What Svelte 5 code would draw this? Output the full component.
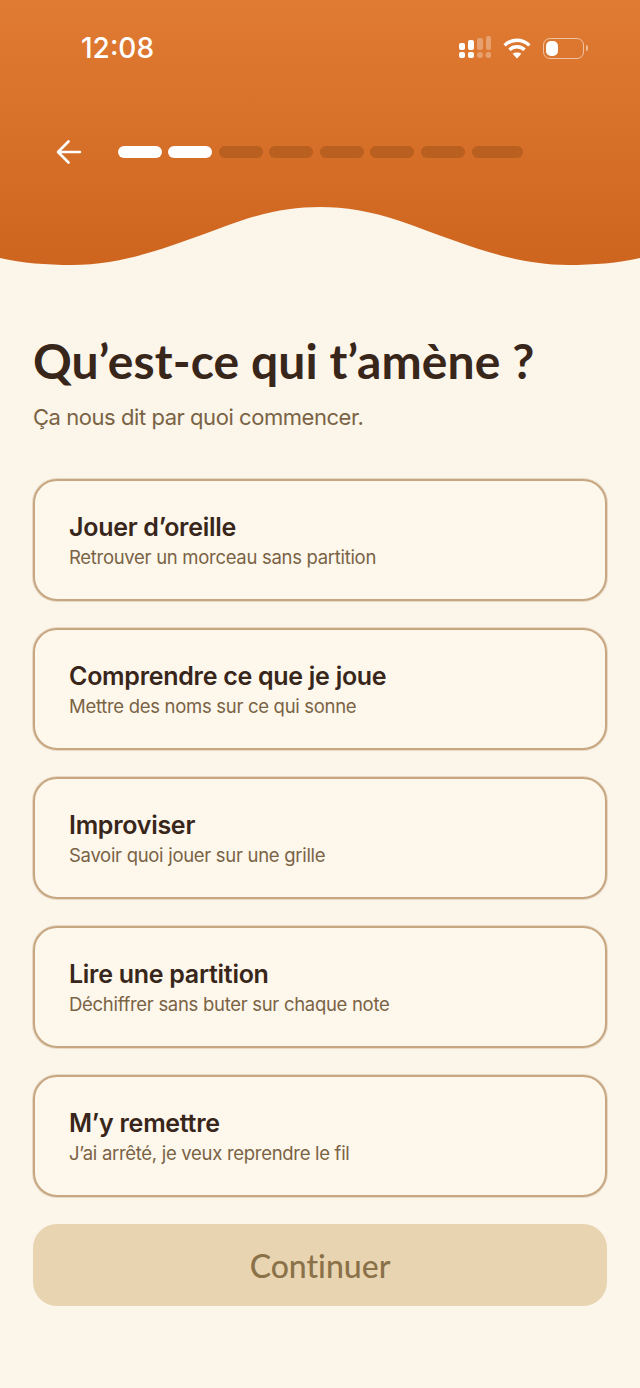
<script>
  const steps = [true, true, false, false, false, false, false, false];

  const options = [
    { title: "Jouer d’oreille", sub: "Retrouver un morceau sans partition" },
    { title: "Comprendre ce que je joue", sub: "Mettre des noms sur ce qui sonne" },
    { title: "Improviser", sub: "Savoir quoi jouer sur une grille" },
    { title: "Lire une partition", sub: "Déchiffrer sans buter sur chaque note" },
    { title: "M’y remettre", sub: "J’ai arrêté, je veux reprendre le fil" },
  ];
</script>

<div class="screen">
  <header class="hero">
    <div class="status">
      <span class="time">12:08</span>
      <div class="status-icons">
        <svg width="32" height="24" viewBox="0 0 32 24" fill="#fff">
          <rect x="0" y="7" width="6" height="7" rx="2" />
          <rect x="0" y="16" width="6" height="6" rx="2" />
          <rect x="9" y="4" width="6" height="10" rx="2" />
          <rect x="9" y="16" width="6" height="6" rx="2" />
          <g opacity="0.3">
            <rect x="18" y="2" width="6" height="12" rx="2" />
            <circle cx="21" cy="19" r="3" />
            <rect x="27" y="0" width="5" height="14" rx="2" />
            <circle cx="29.5" cy="19" r="3" />
          </g>
        </svg>
        <svg class="wifi" width="28" height="22" viewBox="0 0 28 22" fill="none" stroke="#fff" stroke-width="3.4">
          <path d="M1.6 8.4C8.6 1.6 19.4 1.6 26.4 8.4" />
          <path d="M6.4 12.8C10.8 8.8 17.2 8.8 21.6 12.8" />
          <path d="M14 21.5L9.6 16.8C12.2 14.9 15.8 14.9 18.4 16.8Z" fill="#fff" stroke="none" />
        </svg>
        <div class="battery">
          <div class="battery-body"><span class="battery-level"></span></div>
          <span class="battery-cap"></span>
        </div>
      </div>
    </div>

    <div class="nav">
      <button class="back" aria-label="Retour">
        <svg width="26" height="26" viewBox="0 0 26 26" fill="none" stroke="#fff" stroke-width="2.6" stroke-linecap="round" stroke-linejoin="round">
          <path d="M24 13H2.5M12.5 2.5L2 13l10.5 10.5" />
        </svg>
      </button>
      <div class="progress">
        {#each steps as done}
          <span class="step" class:done></span>
        {/each}
      </div>
    </div>

    <svg class="wave" width="640" height="60" viewBox="0 0 640 60" preserveAspectRatio="none">
      <path d="M0 52C22 57 46 59 72 59C130 59 180 36 240 15C270 5 295 1 320 1C345 1 370 5 400 15C460 36 510 59 568 59C594 59 618 57 640 52V60H0Z" fill="#fbf5ea" />
    </svg>
  </header>

  <main class="content">
    <h1>Qu’est-ce qui t’amène ?</h1>
    <p class="lead">Ça nous dit par quoi commencer.</p>

    <div class="options">
      {#each options as opt}
        <button class="card">
          <span class="card-title">{opt.title}</span>
          <span class="card-sub">{opt.sub}</span>
        </button>
      {/each}
    </div>

    <button class="continue" disabled>Continuer</button>
  </main>
</div>

<style>
  :global(body) {
    margin: 0;
    background: #fbf5ea;
  }

  .screen {
    width: 640px;
    height: 1388px;
    overflow: hidden;
    background: #fbf5ea;
    font-family: Inter, "Liberation Sans", sans-serif;
  }

  .hero {
    height: 266px;
    display: flex;
    flex-direction: column;
    background: linear-gradient(180deg, #e07b33 0%, #ce651f 100%);
  }

  .status {
    display: flex;
    align-items: center;
    justify-content: space-between;
    height: 24px;
    padding: 36px 52px 0 81px;
  }

  .time {
    color: #fff;
    font-size: 28px;
    font-weight: 500;
    line-height: 24px;
  }

  .status-icons {
    display: flex;
    align-items: center;
  }

  .wifi {
    margin-left: 12px;
  }

  .battery {
    display: flex;
    align-items: center;
    margin-left: 12px;
  }

  .battery-body {
    box-sizing: border-box;
    width: 41px;
    height: 21px;
    padding: 2px;
    border: 1px solid rgba(255, 255, 255, 0.55);
    border-radius: 7px;
  }

  .battery-level {
    display: block;
    width: 12px;
    height: 15px;
    background: #fff;
    border-radius: 5px;
  }

  .battery-cap {
    width: 2px;
    height: 6px;
    margin-left: 2px;
    border-radius: 0 2px 2px 0;
    background: rgba(255, 255, 255, 0.5);
  }

  .nav {
    display: flex;
    align-items: center;
    margin-top: 79px;
    padding-left: 56px;
    height: 26px;
  }

  .back {
    display: flex;
    width: 26px;
    height: 26px;
    padding: 0;
    border: 0;
    background: none;
  }

  .progress {
    display: flex;
    gap: 6.6px;
    margin-left: 35.5px;
  }

  .step {
    width: 44px;
    height: 12px;
    border-radius: 6px;
    background: #b95f1f;
  }

  .step.done {
    background: #fff;
  }

  .step:last-child {
    width: 51px;
  }

  .wave {
    display: block;
    margin-top: auto;
  }

  .content {
    padding: 70px 33px 0;
  }

  h1 {
    margin: 0;
    color: #38261a;
    font-family: Lato, "Open Sans", sans-serif;
    font-size: 48px;
    font-weight: 700;
    line-height: 50px;
    letter-spacing: 0.1px;
  }

  .lead {
    margin: 16px 0 0;
    color: #7a6345;
    font-size: 22px;
    line-height: 30px;
    letter-spacing: -0.45px;
  }

  .options {
    display: flex;
    flex-direction: column;
    gap: 27px;
    margin-top: 47px;
  }

  .card {
    box-sizing: border-box;
    display: flex;
    flex-direction: column;
    justify-content: center;
    width: 574px;
    height: 122px;
    padding: 1px 34px 0;
    border: 2px solid #c6a781;
    border-radius: 24px;
    box-shadow: 0 0 0 1px rgba(198, 167, 129, 0.35);
    background: #fdf7ec;
    font-family: inherit;
    text-align: left;
  }

  .card-title {
    color: #38261a;
    font-size: 25px;
    font-weight: 600;
    line-height: 32px;
    letter-spacing: -0.28px;
  }

  .card-sub {
    margin-top: 1px;
    color: #7a6345;
    font-size: 18.5px;
    line-height: 26px;
    letter-spacing: -0.3px;
  }

  .continue {
    display: block;
    width: 574px;
    height: 82px;
    margin-top: 27px;
    padding: 0;
    border: 0;
    border-radius: 24px;
    background: #e8d4b0;
    color: #8a7149;
    font-family: Lato, "Open Sans", sans-serif;
    font-size: 32px;
    font-weight: 500;
    font-variant-ligatures: none;
  }
</style>
